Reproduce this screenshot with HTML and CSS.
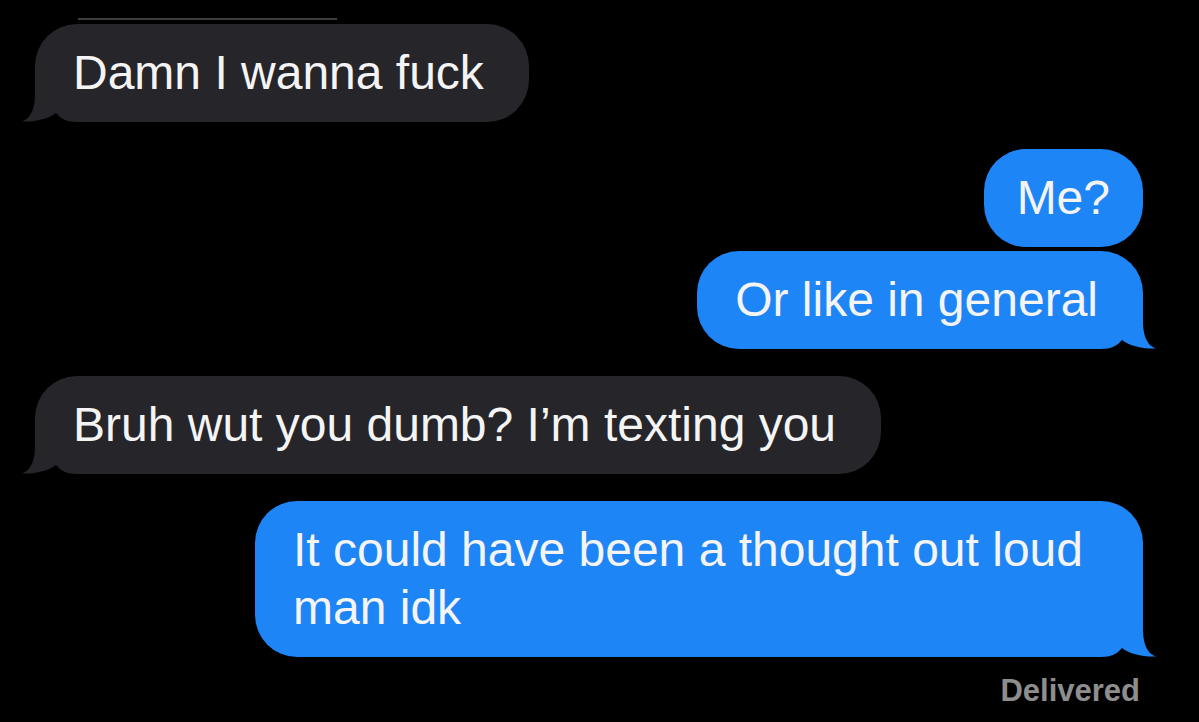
FILE: index.html
```html
<!DOCTYPE html>
<html lang="en">
<head>
<meta charset="utf-8">
<title>Messages</title>
<link rel="stylesheet" href="styles.css">
</head>
<body>
<main class="thread">
  <div class="cut"></div>

  <div class="bubble them tail gap-first">
    <span class="txt">Damn I wanna fuck</span>
    <svg class="tail-svg" viewBox="0 0 56 44" width="56" height="44" aria-hidden="true">
      <rect x="14" y="16" width="42" height="28" fill="#000"/>
      <path d="M14,0 H56 V44 C46,44 40,41 35,35 C27,41 15,44 1,43.5 C8,41 14,34 14,16 Z" fill="#262529"/>
    </svg>
  </div>

  <div class="bubble me short gap-sender">
    <span class="txt">Me?</span>
  </div>

  <div class="bubble me tail gap-same">
    <span class="txt">Or like in general</span>
    <svg class="tail-svg" viewBox="0 0 56 44" width="56" height="44" aria-hidden="true">
      <rect x="14" y="16" width="42" height="28" fill="#000"/>
      <path d="M14,0 H56 V44 C46,44 40,41 35,35 C27,41 15,44 1,43.5 C8,41 14,34 14,16 Z" fill="#1d85f6"/>
    </svg>
  </div>

  <div class="bubble them tail gap-sender">
    <span class="txt">Bruh wut you dumb? I’m texting you</span>
    <svg class="tail-svg" viewBox="0 0 56 44" width="56" height="44" aria-hidden="true">
      <rect x="14" y="16" width="42" height="28" fill="#000"/>
      <path d="M14,0 H56 V44 C46,44 40,41 35,35 C27,41 15,44 1,43.5 C8,41 14,34 14,16 Z" fill="#262529"/>
    </svg>
  </div>

  <div class="bubble me tail gap-sender">
    <span class="txt">It could have been a thought out loud man idk</span>
    <svg class="tail-svg" viewBox="0 0 56 44" width="56" height="44" aria-hidden="true">
      <rect x="14" y="16" width="42" height="28" fill="#000"/>
      <path d="M14,0 H56 V44 C46,44 40,41 35,35 C27,41 15,44 1,43.5 C8,41 14,34 14,16 Z" fill="#1d85f6"/>
    </svg>
  </div>

  <div class="status">Delivered</div>
</main>
</body>
</html>
```

FILE: styles.css
```css
* {
  box-sizing: border-box;
}

html,
body {
  margin: 0;
  padding: 0;
  background: #000;
  height: 100%;
  overflow: hidden;
}

body {
  font-family: "Liberation Sans", Arial, Helvetica, sans-serif;
  color: #f4f4f4;
}

.thread {
  display: flex;
  flex-direction: column;
  padding: 18px 56px 0 35px;
}

.cut {
  width: 259px;
  height: 2px;
  margin-left: 43px;
  background: #3b3e3e;
}

.bubble {
  position: relative;
  max-width: 888px;
  padding: 20px 45px 20px 38px;
  border-radius: 42px;
  font-size: 48px;
  line-height: 58px;
  white-space: normal;
}

.bubble .txt {
  position: relative;
  z-index: 1;
}

.them {
  align-self: flex-start;
  background: #262529;
}

.me {
  align-self: flex-end;
  background: #1d85f6;
}

.short {
  padding-left: 33px;
  padding-right: 33px;
}

.them.tail {
  border-bottom-left-radius: 0;
}

.me.tail {
  border-bottom-right-radius: 0;
}

.tail-svg {
  position: absolute;
  bottom: 0;
  display: block;
}

.them .tail-svg {
  left: -14px;
}

.me .tail-svg {
  right: -14px;
  transform: scaleX(-1);
}

.gap-first {
  margin-top: 4px;
}

.gap-sender {
  margin-top: 27px;
}

.gap-same {
  margin-top: 4px;
}

.status {
  align-self: flex-end;
  margin-top: 16px;
  margin-right: 3px;
  font-size: 31px;
  font-weight: 700;
  line-height: 36px;
  color: #8e8e8e;
}
```
